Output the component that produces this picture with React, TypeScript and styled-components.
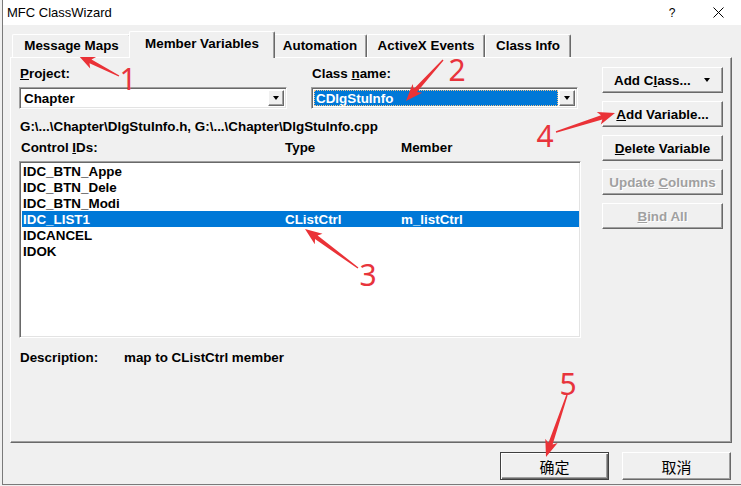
import React from "react"
import styled, { createGlobalStyle, css } from "styled-components"

const GlobalStyle = createGlobalStyle`
  html, body {
    margin: 0;
    padding: 0;
    background: #f0f0f0;
  }
  body {
    width: 741px;
    height: 486px;
    overflow: hidden;
    font-family: "Liberation Sans", Arial, sans-serif;
  }
`

const Screen = styled.div`
  position: relative;
  width: 741px;
  height: 486px;
`

const Window = styled.div`
  margin-left: 2px;
  width: 739px;
  height: 485px;
  box-sizing: border-box;
  border-left: 1px solid #7a7a7a;
  border-bottom: 1px solid #7a7a7a;
  background: #f0f0f0;
  display: flex;
  flex-direction: column;
`

const TitleBar = styled.div`
  height: 25px;
  flex: none;
  background: #fff;
  display: flex;
  align-items: center;
`

const Title = styled.div`
  flex: 1;
  padding-left: 4px;
  font-size: 13px;
  color: #000;
`

const CaptionButton = styled.div`
  width: 46px;
  height: 25px;
  display: flex;
  align-items: center;
  justify-content: center;
  font-size: 12px;
  color: #000;
`

const Client = styled.div`
  flex: 1;
  display: flex;
  flex-direction: column;
  padding: 6px 6px 0 7px;
`

const TabStrip = styled.div`
  height: 26px;
  display: flex;
  align-items: flex-end;
  padding-left: 2px;
  position: relative;
  z-index: 1;
`

const Tab = styled.div<{ $w: number; $active?: boolean }>`
  width: ${p => p.$w}px;
  height: 23px;
  box-sizing: border-box;
  display: flex;
  align-items: center;
  justify-content: center;
  font-size: 13.4px;
  font-weight: bold;
  color: #000;
  background: #f0f0f0;
  border-top: 1px solid #fff;
  border-left: 1px solid #fff;
  border-right: 1px solid #696969;
  border-radius: 2px 2px 0 0;
  box-shadow: inset -1px 0 #a0a0a0;
  padding-bottom: 1px;
  ${p => p.$active && css`
    margin: 0 -2px -1px -2px;
    position: relative;
    z-index: 2;
    height: 27px;
    padding-bottom: 4px;
  `}
`

const Panel = styled.div`
  width: 722px;
  height: 386px;
  box-sizing: border-box;
  border-top: 1px solid #fff;
  border-left: 1px solid #fff;
  border-right: 1px solid #696969;
  border-bottom: 1px solid #696969;
  box-shadow: inset -1px -1px #a0a0a0;
  display: flex;
  gap: 21px;
  padding: 9px 8px 0 8px;
`

const LeftColumn = styled.div`
  width: 562px;
  display: flex;
  flex-direction: column;
`

const RightColumn = styled.div`
  width: 121px;
  display: flex;
  flex-direction: column;
  gap: 8px;
`

const FieldRow = styled.div`
  display: flex;
  gap: 24px;
`

const Field = styled.div<{ $w: number }>`
  width: ${p => p.$w}px;
  display: flex;
  flex-direction: column;
  gap: 6px;
`

const Label = styled.div`
  font-size: 13.4px;
  font-weight: bold;
  line-height: 14px;
  color: #000;
  padding-left: 1px;
  white-space: nowrap;
`

const Combo = styled.div`
  height: 22px;
  box-sizing: border-box;
  background: #fff;
  border-top: 1px solid #a0a0a0;
  border-left: 1px solid #a0a0a0;
  border-right: 1px solid #fff;
  border-bottom: 1px solid #fff;
  box-shadow: inset 1px 1px #696969, inset -1px -1px #e3e3e3;
  display: flex;
  align-items: stretch;
  padding: 2px;
`

const ComboText = styled.div<{ $selected?: boolean }>`
  flex: 1;
  display: flex;
  align-items: center;
  font-size: 13.4px;
  font-weight: bold;
  padding-left: 2px;
  margin-right: 1px;
  color: ${p => (p.$selected ? "#fff" : "#000")};
  background: ${p => (p.$selected ? "#0078d7" : "transparent")};
  outline: ${p => (p.$selected ? "1px dotted #f3c48a" : "none")};
  outline-offset: -1px;
`

const DropButton = styled.div`
  width: 16px;
  box-sizing: border-box;
  background: #f0f0f0;
  border-top: 1px solid #fff;
  border-left: 1px solid #fff;
  border-right: 1px solid #696969;
  border-bottom: 1px solid #696969;
  box-shadow: inset -1px -1px #a0a0a0;
  display: flex;
  align-items: center;
  justify-content: center;
`

const Triangle = styled.span`
  width: 0;
  height: 0;
  border-left: 3.5px solid transparent;
  border-right: 3.5px solid transparent;
  border-top: 4px solid #000;
`

const PathText = styled.div`
  margin-top: 11px;
  font-size: 13.4px;
  font-weight: bold;
  line-height: 14px;
  padding-left: 1px;
  color: #000;
  white-space: nowrap;
`

const HeaderRow = styled.div`
  margin-top: 7px;
  display: grid;
  grid-template-columns: 264px 116px 1fr;
  padding-left: 1px;
`

const List = styled.div`
  margin-top: 6px;
  height: 177px;
  box-sizing: border-box;
  background: #fff;
  border-top: 1px solid #a0a0a0;
  border-left: 1px solid #a0a0a0;
  border-right: 1px solid #fff;
  border-bottom: 1px solid #fff;
  box-shadow: inset 1px 1px #696969, inset -1px -1px #e3e3e3;
  padding: 1px 1px 0 2px;
  display: flex;
  flex-direction: column;
`

const Row = styled.div<{ $selected?: boolean }>`
  height: 16px;
  display: grid;
  grid-template-columns: 262px 116px 1fr;
  align-items: center;
  font-size: 13.4px;
  font-weight: bold;
  padding-left: 1px;
  color: ${p => (p.$selected ? "#fff" : "#000")};
  background: ${p => (p.$selected ? "#0078d7" : "transparent")};
  white-space: nowrap;
`

const DescRow = styled.div`
  margin-top: 13px;
  display: flex;
  font-size: 13.4px;
  font-weight: bold;
  line-height: 14px;
  padding-left: 1px;
  color: #000;
`

const DescLabel = styled.span`
  width: 104px;
`

const Button = styled.div<{ $disabled?: boolean }>`
  height: 26px;
  box-sizing: border-box;
  background: #f0f0f0;
  border-top: 1px solid #fff;
  border-left: 1px solid #fff;
  border-right: 1px solid #696969;
  border-bottom: 1px solid #696969;
  box-shadow: inset -1px -1px #a0a0a0;
  display: flex;
  align-items: center;
  justify-content: center;
  font-size: 13.4px;
  font-weight: bold;
  white-space: nowrap;
  color: ${p => (p.$disabled ? "#a0a0a0" : "#000")};
  text-shadow: ${p => (p.$disabled ? "1px 1px 0 #fff" : "none")};
`

const SplitButton = styled(Button)`
  justify-content: space-between;
  padding: 0 12px 0 11px;
`

const Footer = styled.div`
  width: 721px;
  margin-top: 9px;
  display: flex;
  justify-content: flex-end;
  gap: 13px;
`

const DialogButton = styled.div<{ $default?: boolean }>`
  width: 109px;
  height: 28px;
  box-sizing: border-box;
  background: #f0f0f0;
  display: flex;
  align-items: center;
  justify-content: center;
  font-family: "Noto Sans CJK SC", "Liberation Sans", sans-serif;
  font-size: 15px;
  color: #000;
  ${p => p.$default
    ? css`
      border: 1px solid #404040;
      box-shadow: inset 1px 1px #fff, inset -1px -1px #696969, inset -2px -2px #a0a0a0;
    `
    : css`
      border-top: 1px solid #fff;
      border-left: 1px solid #fff;
      border-right: 1px solid #696969;
      border-bottom: 1px solid #696969;
      box-shadow: inset -1px -1px #a0a0a0;
    `}
`

const Overlay = styled.svg`
  position: absolute;
  left: 0;
  top: 0;
  pointer-events: none;
`

const Digit = styled.text`
  font-family: "Noto Sans", "Liberation Sans", sans-serif;
  font-size: 30px;
  fill: #e8343c;
`

// tapered annotation arrow, from tail (tx,ty) to tip (hx,hy)
const arrowPoints = (tx: number, ty: number, hx: number, hy: number) => {
  const dx = hx - tx
  const dy = hy - ty
  const len = Math.hypot(dx, dy)
  const ux = dx / len
  const uy = dy / len
  const nx = -uy
  const ny = ux
  const headLen = 17
  const headW = 6.5
  const shaft0 = 0.7
  const shaft1 = 2.2
  const notch = 3
  const bx = hx - ux * headLen
  const by = hy - uy * headLen
  const ix = bx + ux * notch
  const iy = by + uy * notch
  const pts = [
    [tx + nx * shaft0, ty + ny * shaft0],
    [ix + nx * shaft1, iy + ny * shaft1],
    [bx + nx * headW, by + ny * headW],
    [hx, hy],
    [bx - nx * headW, by - ny * headW],
    [ix - nx * shaft1, iy - ny * shaft1],
    [tx - nx * shaft0, ty - ny * shaft0],
  ]
  return pts.map(p => p[0].toFixed(1) + "," + p[1].toFixed(1)).join(" ")
}

const arrows = [
  { t: [119, 76], h: [78, 55], n: "1", x: 128, y: 90 },
  { t: [443, 60], h: [406, 101], n: "2", x: 457, y: 81 },
  { t: [358, 268], h: [305, 229], n: "3", x: 368, y: 286 },
  { t: [556, 132], h: [615, 113], n: "4", x: 545, y: 147 },
  { t: [567, 395], h: [546, 457], n: "5", x: 568, y: 395 },
]

const rows = [
  { id: "IDC_BTN_Appe", type: "", member: "" },
  { id: "IDC_BTN_Dele", type: "", member: "" },
  { id: "IDC_BTN_Modi", type: "", member: "" },
  { id: "IDC_LIST1", type: "CListCtrl", member: "m_listCtrl", selected: true },
  { id: "IDCANCEL", type: "", member: "" },
  { id: "IDOK", type: "", member: "" },
]

export default function App() {
  return (
    <Screen>
      <GlobalStyle />
      <Window>
        <TitleBar>
          <Title>MFC ClassWizard</Title>
          <CaptionButton>?</CaptionButton>
          <CaptionButton>
            <svg width="11" height="11" viewBox="0 0 11 11">
              <path d="M0.5 0.5 L10.5 10.5 M10.5 0.5 L0.5 10.5" stroke="#000" strokeWidth="1" />
            </svg>
          </CaptionButton>
        </TitleBar>
        <Client>
          <TabStrip>
            <Tab $w={119}>Message Maps</Tab>
            <Tab $w={146} $active>Member Variables</Tab>
            <Tab $w={94}>Automation</Tab>
            <Tab $w={118}>ActiveX Events</Tab>
            <Tab $w={86}>Class Info</Tab>
          </TabStrip>
          <Panel>
            <LeftColumn>
              <FieldRow>
                <Field $w={268}>
                  <Label><u>P</u>roject:</Label>
                  <Combo>
                    <ComboText>Chapter</ComboText>
                    <DropButton><Triangle /></DropButton>
                  </Combo>
                </Field>
                <Field $w={267}>
                  <Label>Class <u>n</u>ame:</Label>
                  <Combo>
                    <ComboText $selected>CDlgStuInfo</ComboText>
                    <DropButton><Triangle /></DropButton>
                  </Combo>
                </Field>
              </FieldRow>
              <PathText>G:\...\Chapter\DlgStuInfo.h, G:\...\Chapter\DlgStuInfo.cpp</PathText>
              <HeaderRow>
                <Label>Control <u>I</u>Ds:</Label>
                <Label>Type</Label>
                <Label>Member</Label>
              </HeaderRow>
              <List>
                {rows.map(r => (
                  <Row key={r.id} $selected={r.selected}>
                    <span>{r.id}</span>
                    <span>{r.type}</span>
                    <span>{r.member}</span>
                  </Row>
                ))}
              </List>
              <DescRow>
                <DescLabel>Description:</DescLabel>
                <span>map to CListCtrl member</span>
              </DescRow>
            </LeftColumn>
            <RightColumn>
              <SplitButton>
                <span>Add C<u>l</u>ass...</span>
                <Triangle />
              </SplitButton>
              <Button><span><u>A</u>dd Variable...</span></Button>
              <Button><span><u>D</u>elete Variable</span></Button>
              <Button $disabled><span>Update <u>C</u>olumns</span></Button>
              <Button $disabled><span><u>B</u>ind All</span></Button>
            </RightColumn>
          </Panel>
          <Footer>
            <DialogButton $default>确定</DialogButton>
            <DialogButton>取消</DialogButton>
          </Footer>
        </Client>
      </Window>
      <Overlay width="741" height="486" viewBox="0 0 741 486">
        {arrows.map(a => (
          <g key={a.n}>
            <polygon points={arrowPoints(a.t[0], a.t[1], a.h[0], a.h[1])} fill="#ea3237" />
            <Digit x={a.x} y={a.y} textAnchor="middle">{a.n}</Digit>
          </g>
        ))}
      </Overlay>
    </Screen>
  )
}
